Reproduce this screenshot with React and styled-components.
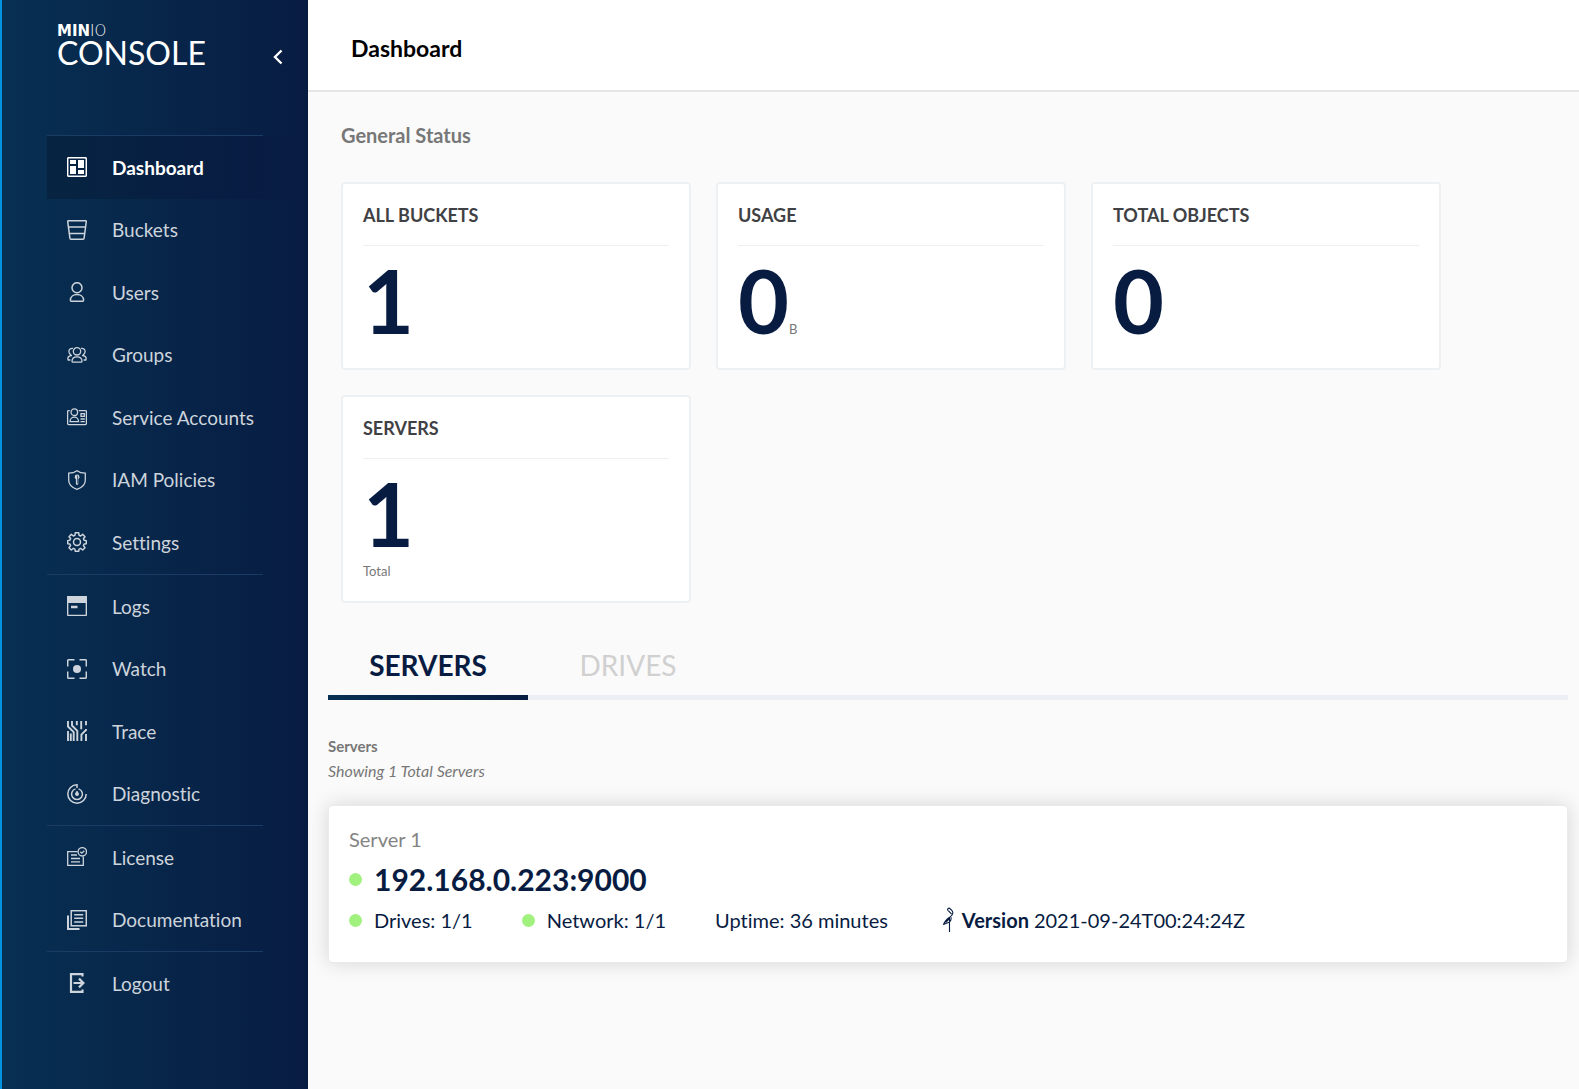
import React from "react";
import styled, { createGlobalStyle, css } from "styled-components";

const GlobalStyle = createGlobalStyle`
  *, *::before, *::after { box-sizing: border-box; }
  body {
    margin: 0;
    background: #fafafa;
    font-family: Lato, "Liberation Sans", sans-serif;
    font-variant-ligatures: none;
  }
  h1, h2, h3, p, ul { margin: 0; padding: 0; }
  button { font-family: inherit; }
`;

const Layout = styled.div`
  display: flex;
  min-height: 100vh;
`;

const Sidebar = styled.aside`
  display: flex;
  flex-direction: column;
  flex: 0 0 308px;
  border-left: 2px solid #0592de;
  padding-left: 45px;
  background: linear-gradient(90deg, #073052 0%, #081c42 100%);
  background-origin: border-box;
  color: #ffffff;
`;

const SidebarHead = styled.div`
  display: flex;
  justify-content: space-between;
  align-items: flex-start;
  height: 135px;
  padding: 23px 19px 0 10px;
`;

const Logo = styled.a`
  display: flex;
  flex-direction: column;
  color: inherit;
  text-decoration: none;
`;

const Brand = styled.span`
  font-family: "DejaVu Sans", sans-serif;
  font-size: 15px;
  line-height: 16px;
  font-weight: 200;
`;

const BrandStrong = styled.strong`
  font-weight: 700;
`;

const Product = styled.span`
  font-size: 32px;
  line-height: 28px;
`;

const Collapse = styled.button`
  display: flex;
  margin-top: 22px;
  padding: 4px;
  border: 0;
  background: none;
  color: inherit;
  cursor: pointer;
`;

const NavGroup = styled.ul`
  list-style: none;
  &::before {
    content: "";
    display: block;
    width: 216px;
    height: 1px;
    background: #1c3b64;
  }
`;

const NavItem = styled.li`
  height: 62px;
  &:nth-child(odd) { height: 63px; }
`;

const Glyph = styled.svg`
  display: block;
  flex: none;
`;

const NavLink = styled.a`
  display: flex;
  align-items: center;
  gap: 25px;
  height: 100%;
  padding-left: 20px;
  font-size: 19px;
  line-height: 24px;
  color: #cdd4dc;
  text-decoration: none;
  ${Glyph} { margin-bottom: 1px; }
  ${(p) =>
    p.$active &&
    css`
      color: #ffffff;
      font-weight: 700;
      background: linear-gradient(90deg, #062442 0%, #081c42 80%, transparent 100%);
    `}
`;

const Main = styled.main`
  flex: 1;
  min-width: 0;
`;

const PageHeader = styled.header`
  display: flex;
  align-items: center;
  height: 92px;
  padding: 6px 43px 0;
  border-bottom: 2px solid #e6e6e6;
  background: #ffffff;
`;

const PageTitle = styled.h1`
  font-size: 23px;
  line-height: 28px;
  font-weight: 700;
  color: #000000;
`;

const Content = styled.div`
  padding: 29px 11px 40px 20px;
`;

const Overview = styled.section`
  padding: 0 13px;
`;

const SectionTitle = styled.h2`
  font-size: 20px;
  line-height: 28px;
  font-weight: 700;
  color: #777777;
`;

const Cards = styled.div`
  display: flex;
  flex-wrap: wrap;
  gap: 25px;
  margin-top: 33px;
`;

const Card = styled.article`
  width: 350px;
  padding: 19px 20px 20px;
  border: 2px solid #edf1f4;
  border-radius: 4px;
  background: #ffffff;
`;

const CardTitle = styled.h3`
  padding-bottom: 18px;
  border-bottom: 1px solid #edeff1;
  font-size: 18px;
  line-height: 24px;
  font-weight: 700;
  color: #3f4144;
`;

const Metric = styled.p`
  padding: 12px 0 6px;
  font-size: 88px;
  line-height: 84px;
  font-weight: 700;
  color: #081c42;
`;

const Unit = styled.span`
  font-size: 13px;
  line-height: 20px;
  font-weight: 400;
  color: #777777;
`;

const Caption = styled.p`
  font-size: 13px;
  line-height: 20px;
  color: #777777;
`;

const Tabs = styled.div`
  display: flex;
  margin-top: 37px;
  background: linear-gradient(#ecf0f4, #ecf0f4) bottom / 100% 5px no-repeat;
`;

const Tab = styled.button`
  width: 200px;
  height: 60px;
  padding: 0 0 10px;
  border: 0;
  background: none;
  font-size: 28px;
  line-height: 36px;
  color: #d0d0d0;
  cursor: pointer;
  ${(p) =>
    p.$active &&
    css`
      font-weight: 700;
      color: #081c42;
      background: linear-gradient(90deg, #073052 0%, #081c42 100%) bottom / 100% 5px no-repeat;
    `}
`;

const ListTitle = styled.h2`
  margin-top: 35px;
  font-size: 15px;
  line-height: 22px;
  font-weight: 700;
  color: #777777;
`;

const ListNote = styled.p`
  margin-top: 3px;
  font-size: 16px;
  line-height: 22px;
  font-style: italic;
  color: #777777;
`;

const ServerCard = styled.article`
  margin-top: 23px;
  padding: 19px 20px 28px;
  border: 1px solid #eaeaea;
  border-radius: 4px;
  background: #ffffff;
  box-shadow: 0 0 20px rgba(0, 0, 0, 0.15);
  color: #081c42;
`;

const ServerLabel = styled.p`
  font-size: 20px;
  line-height: 28px;
  color: #848484;
`;

const ServerAddress = styled.h3`
  display: flex;
  align-items: center;
  gap: 12px;
  font-size: 30px;
  line-height: 53px;
  font-weight: 700;
`;

const Facts = styled.ul`
  display: flex;
  flex-wrap: wrap;
  gap: 0 49px;
  list-style: none;
  font-size: 20px;
  line-height: 28px;
`;

const Fact = styled.li`
  display: flex;
  align-items: center;
  gap: ${(p) => p.$gap || 12}px;
`;

const Status = styled.span`
  flex: none;
  width: 13px;
  height: 13px;
  border-radius: 50%;
  background: #a1f17f;
`;

const line = { fill: "none", stroke: "currentColor", strokeWidth: 1.5 };

const icons = {
  dashboard: (
    <>
      <rect x="0.7" y="0.7" width="18.6" height="18.6" rx="1" {...line} />
      <path fill="currentColor" d="M3 3h6v4H3zM11 3h6v8h-6zM3 9h6v8H3zM11 13h6v4h-6z" />
    </>
  ),
  buckets: (
    <g {...line}>
      <path d="M1.2.8h17.6q.6 0 .5.7L17.1 18.2q-.1 1-1 1H3.9q-.9 0-1-1L.7 1.500q-.1-.7.5-.7z" />
      <path d="M1.500 6.900h17M2.300 13.500h15.400" />
    </g>
  ),
  users: (
    <g {...line}>
      <circle cx="10" cy="5.700" r="5" />
      <path d="M3.400 18.200c0-3.600 3-5.700 6.600-5.700s6.600 2.100 6.600 5.700q0 1-1 1H4.400q-1 0-1-1z" />
    </g>
  ),
  groups: (
    <g {...line} strokeWidth="1.300">
      <circle cx="10" cy="6.300" r="3.700" />
      <path d="M5 16.300c0-2.800 2.200-4.500 5-4.500s5 1.700 5 4.500q0 .9-.9.9H5.900q-.9 0-.9-.9z" />
      <path d="M6 3.400C3.600 2.900 1.900 4.500 1.900 6.500c0 1.700 1 2.800 2.300 3.400M3.400 15H1.200C.1 12.500 1.900 10.400 5 10.600M14 3.400c2.400-.5 4.100 1.100 4.100 3.100 0 1.700-1 2.800-2.300 3.400M16.600 15h2.200c1.100-2.500-.7-4.600-3.800-4.400" />
    </g>
  ),
  accounts: (
    <g {...line} strokeWidth="1.300">
      <path d="M2.800 3.600H1.600q-1 0-1 1v12q0 1 1 1h16.800q1 0 1-1v-12q0-1-1-1h-6.700" />
      <circle cx="7.300" cy="5.200" r="3.300" />
      <path d="M3 14.700c0-2.600 2-4.500 4.300-4.500s4.300 1.900 4.300 4.500z" />
      <path d="M14 6.700h3.300v2.600H14zM13.500 12h4.300M13.500 14.600h4.300" />
    </g>
  ),
  policies: (
    <>
      <path {...line} strokeWidth="1.300" d="M10 .8c2.600 1.900 5.300 2.400 8.300 2.400v7c0 4.300-4 7.600-8.300 9.100C5.700 17.800 1.700 14.500 1.700 10.200v-7C4.700 3.200 7.400 2.700 10 .8z" />
      <path fill="currentColor" d="M7.700 7a2.400 2.400 0 0 1 4.800 0c0 1-.5 1.700-1.200 2.100v5l-1.200 1.200-1.200-1.200v-5C8.200 8.700 7.700 8 7.700 7z" />
      <path stroke="#08294c" strokeWidth=".7" d="M10.600 5.500v8" />
    </>
  ),
  settings: (
    <g {...line} strokeLinejoin="round">
      <circle cx="10" cy="10" r="3.500" />
      <path d="M8.300.8h3.400l.4 2.500 1.500.7 2.100-1.600 2.300 2.300-1.600 2.100.7 1.500 2.200.4v3l-2.200.4-.7 1.500 1.600 2.100-2.300 2.300-2.100-1.600-1.500.7-.4 2.200H8.300l-.4-2.200-1.500-.7-2.100 1.600L2 15.700l1.600-2.100-.7-1.500-2.200-.4v-3l2.200-.6.7-1.500L2 4.700l2.300-2.300L6.400 4l1.500-.7z" />
    </g>
  ),
  logs: (
    <>
      <rect x=".6" y=".6" width="18.800" height="18.800" rx="1" {...line} />
      <path fill="currentColor" d="M0 1q0-1 1-1h18q1 0 1 1v6H0zM4 9.700h6.500v2.500H4z" />
    </>
  ),
  watch: (
    <>
      <path {...line} d="M7.500.8H1.700q-1 0-1 1v5.700M12.500.8h5.800q1 0 1 1v5.700M7.500 19.200H1.700q-1 0-1-1v-5.700M12.500 19.200h5.800q1 0 1-1v-5.700" />
      <circle cx="10" cy="10" r="4" fill="currentColor" />
    </>
  ),
  trace: (
    <path
      {...line}
      strokeWidth="1.900"
      d="M1 0v5.500l5.700 5.700V20M5 0v4.500l5.300 5.300V20M9.800 0v4.200M14.200 0v8.200M19 0v4.200M19 8v1l-4.600 4.600V20M1 10v10M3.800 12.500V20M19 13v7"
    />
  ),
  diagnostic: (
    <>
      <path {...line} d="M10 4V.8a9.200 9.200 0 1 0 9.200 9.200M8.500 4.900a5.400 5.400 0 1 0 3 0M10 7V10" />
      <circle cx="10" cy="10" r="2" fill="currentColor" />
    </>
  ),
  license: (
    <g {...line} strokeWidth="1.300">
      <path d="M10.600 4.600H.7v13.700h15.600V9.500" />
      <path d="M4 8h6M4 11.500h9M4 14.900h9" />
      <circle cx="15.300" cy="4.800" r="4.200" />
      <path d="M13.300 4.800l1.500 1.400L17.300 3.700" />
    </g>
  ),
  docs: (
    <>
      <rect x="4.200" y=".7" width="15.100" height="15.100" {...line} />
      <path {...line} d="M7.200 4.700h9M7.200 8.300h9M7.200 11.900h9" />
      <path {...line} strokeWidth="2" d="M1 5.500V19h11.500" />
    </>
  ),
  logout: (
    <path
      {...line}
      strokeWidth="2.200"
      d="M15.500 1.100H4v17.800h11.500M15.500 0v3.500M15.500 20v-3.500M6.500 10h9.500M12 5.600l4.400 4.400-4.400 4.400"
    />
  ),
};

const Icon = ({ name }) => (
  <Glyph width="20" height="20" viewBox="0 0 20 20" aria-hidden="true">
    {icons[name]}
  </Glyph>
);

const groups = [
  [
    ["dashboard", "Dashboard"],
    ["buckets", "Buckets"],
    ["users", "Users"],
    ["groups", "Groups"],
    ["accounts", "Service Accounts"],
    ["policies", "IAM Policies"],
    ["settings", "Settings"],
  ],
  [
    ["logs", "Logs"],
    ["watch", "Watch"],
    ["trace", "Trace"],
    ["diagnostic", "Diagnostic"],
  ],
  [
    ["license", "License"],
    ["docs", "Documentation"],
  ],
  [["logout", "Logout"]],
];

const metrics = [
  { title: "ALL BUCKETS", value: "1" },
  { title: "USAGE", value: "0", unit: "B" },
  { title: "TOTAL OBJECTS", value: "0" },
  { title: "SERVERS", value: "1", caption: "Total" },
];

export default function App() {
  return (
    <>
      <GlobalStyle />
      <Layout>
        <Sidebar>
          <SidebarHead>
            <Logo href="#home">
              <Brand>
                <BrandStrong>MIN</BrandStrong>IO
              </Brand>
              <Product>CONSOLE</Product>
            </Logo>
            <Collapse type="button" aria-label="Collapse menu">
              <Glyph width="14" height="16" viewBox="0 0 14 16" aria-hidden="true">
                <path d="M10.500 1.500L4 8l6.500 6.500" fill="none" stroke="currentColor" strokeWidth="2.400" />
              </Glyph>
            </Collapse>
          </SidebarHead>
          <nav aria-label="Main menu">
            {groups.map((items) => (
              <NavGroup key={items[0][0]}>
                {items.map(([id, label]) => (
                  <NavItem key={id}>
                    <NavLink href={`#${id}`} $active={id === "dashboard"}>
                      <Icon name={id} />
                      {label}
                    </NavLink>
                  </NavItem>
                ))}
              </NavGroup>
            ))}
          </nav>
        </Sidebar>
        <Main>
          <PageHeader>
            <PageTitle>Dashboard</PageTitle>
          </PageHeader>
          <Content>
            <Overview>
              <SectionTitle>General Status</SectionTitle>
              <Cards>
                {metrics.map((m) => (
                  <Card key={m.title}>
                    <CardTitle>{m.title}</CardTitle>
                    <Metric>
                      {m.value}
                      {m.unit && <Unit>{m.unit}</Unit>}
                    </Metric>
                    {m.caption && <Caption>{m.caption}</Caption>}
                  </Card>
                ))}
              </Cards>
            </Overview>
            <Tabs role="tablist">
              <Tab type="button" role="tab" aria-selected="true" $active>
                SERVERS
              </Tab>
              <Tab type="button" role="tab" aria-selected="false">
                DRIVES
              </Tab>
            </Tabs>
            <ListTitle>Servers</ListTitle>
            <ListNote>Showing 1 Total Servers</ListNote>
            <ServerCard>
              <ServerLabel>Server 1</ServerLabel>
              <ServerAddress>
                <Status />
                192.168.0.223:9000
              </ServerAddress>
              <Facts>
                <Fact>
                  <Status />
                  Drives: 1/1
                </Fact>
                <Fact>
                  <Status />
                  Network: 1/1
                </Fact>
                <Fact>Uptime: 36 minutes</Fact>
                <Fact $gap={5}>
                  <Glyph width="20" height="26" viewBox="0 0 20 26" aria-hidden="true">
                    <path
                      d="M10.800 3.600c-.8-1.900 1.200-3.200 2.400-1.800 1 1.200 2.700 2 2.700 4.200 0 2-1.500 3-3.200 4.200-2.900 2-5.100 3.500-6 7.200l5.400-2.200c1.800-.9 2.300-2.600 2-5M11.300 3.600l3.300 3.600M12.500 10.500v14.500M8.500 15.500l4-3.800"
                      fill="none"
                      stroke="currentColor"
                      strokeWidth="1.100"
                    />
                  </Glyph>
                  <strong>Version</strong> 2021-09-24T00:24:24Z
                </Fact>
              </Facts>
            </ServerCard>
          </Content>
        </Main>
      </Layout>
    </>
  );
}
